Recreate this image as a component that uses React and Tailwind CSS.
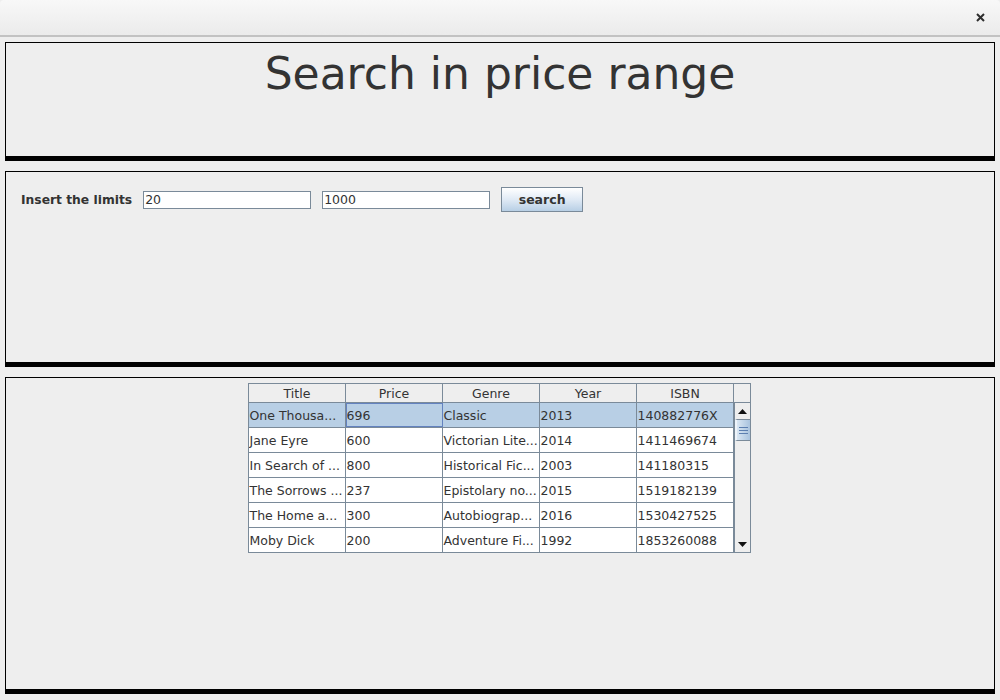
import React from 'react';

const rows = [
  ['One Thousa...', '696', 'Classic', '2013', '140882776X'],
  ['Jane Eyre', '600', 'Victorian Lite...', '2014', '1411469674'],
  ['In Search of ...', '800', 'Historical Fic...', '2003', '141180315'],
  ['The Sorrows ...', '237', 'Epistolary no...', '2015', '1519182139'],
  ['The Home a...', '300', 'Autobiograp...', '2016', '1530427525'],
  ['Moby Dick', '200', 'Adventure Fi...', '1992', '1853260088'],
];

const headers = ['Title', 'Price', 'Genre', 'Year', 'ISBN'];

// Arrow button of the scroll bar
const ArrowButton = ({ up }) => (
  <div className="h-[16px] w-full flex items-center justify-center bg-[#eeeeee]">
    <svg width="9" height="5" viewBox="0 0 9 5">
      {up ? <polygon points="0,5 9,5 4.5,0" fill="#111" /> : <polygon points="0,0 9,0 4.5,5" fill="#111" />}
    </svg>
  </div>
);

const ResultTable = () => (
  <div className="flex border border-[#7a8a99] bg-white">
    <div className="w-[485px] flex flex-col">
      {/* header */}
      <div className="flex h-[19px] bg-[#eeeeee] border-b border-[#7a8a99]">
        {headers.map((h) => (
          <div key={h} className="w-[97px] border-r border-[#7a8a99] flex items-center justify-center pt-[2px] pl-[1px] text-[12.5px] text-[#333333]">
            {h}
          </div>
        ))}
      </div>
      {rows.map((r, i) => (
        <div key={i} className={`flex h-[25px] border-b border-[#7a8a99] last:border-b-0 last:h-[24px] ${i === 0 ? 'bg-[#b8cfe5]' : 'bg-white'}`}>
          {r.map((c, j) => (
            <div
              key={j}
              className={`w-[97px] border-r border-[#7a8a99] flex items-center pl-[1px] pt-[2px] text-[12.5px] text-[#333333] whitespace-nowrap overflow-hidden ${i === 0 && j === 1 ? 'outline outline-1 -outline-offset-1 outline-[#6382bf] border-[#6382bf]' : ''}`}
            >
              {c}
            </div>
          ))}
        </div>
      ))}
    </div>
    {/* vertical scroll bar */}
    <div className="w-[16px] flex flex-col bg-[#eeeeee]">
      <div className="h-[19px] border-b border-[#7a8a99]" />
      <div className="flex-1 flex flex-col border-l border-[#7a8a99]">
        <ArrowButton up />
        <div className="h-[22px] bg-gradient-to-r from-[#dae7f3] to-[#a9c3de] border-l-2 border-l-[#eef4fa] border-y border-[#7a8a99] flex flex-col items-center justify-center gap-[2px]">
          <div className="w-[9px] h-[1px] bg-[#5c7fb0]" />
          <div className="w-[9px] h-[1px] bg-[#5c7fb0]" />
          <div className="w-[9px] h-[1px] bg-[#5c7fb0]" />
        </div>
        <div className="flex-1" />
        <ArrowButton />
      </div>
    </div>
  </div>
);

const App = () => {
  return (
    <div className="w-[1000px] h-[700px] bg-[#eeeeee] overflow-hidden" style={{ fontFamily: '"DejaVu Sans", sans-serif' }}>
      {/* Window title bar */}
      <div className="h-[37px] bg-gradient-to-b from-[#f8f8f8] to-[#ebebeb] border-b-2 border-[#c2c2c2] rounded-t-[4px] flex items-center justify-end pr-[15px]">
        <svg width="9" height="9" viewBox="0 0 9 9">
          <path d="M1 1 L8 8 M8 1 L1 8" stroke="#2e2e2e" strokeWidth="2" />
        </svg>
      </div>

      <div className="flex flex-col gap-[10px] px-[5px] pt-[5px]">
        {/* Heading panel */}
        <div className="h-[119px] border border-black border-b-[5px] flex justify-center pt-[5px]">
          <h1 className="text-[44px] leading-[52px] text-[#333333]">Search in price range</h1>
        </div>

        {/* Input panel */}
        <div className="h-[196px] border border-black border-b-[5px] pt-[15px] pl-[15px]">
          <div className="flex items-center gap-[11px]">
            <span className="text-[12.3px] font-bold text-[#333333] pt-[2px]">Insert the limits</span>
            <input
              defaultValue="20"
              className="w-[168px] h-[18px] bg-white border border-[#7a8a99] px-[1px] pt-[1px] text-[12.5px] text-[#333333] outline-none"
            />
            <input
              defaultValue="1000"
              className="w-[168px] h-[18px] bg-white border border-[#7a8a99] px-[1px] pt-[1px] text-[12.5px] text-[#333333] outline-none"
            />
            <button className="w-[82px] h-[25px] border border-[#7a8a99] bg-gradient-to-b from-[#ffffff] via-[#e0eaf5] to-[#b8cfe5] pt-[1px] text-[12.5px] font-bold text-[#333333]">
              search
            </button>
          </div>
        </div>

        {/* Results panel */}
        <div className="h-[317px] border border-black border-b-[5px] flex justify-center pt-[5px] pr-[2px]">
          <div>
            <ResultTable />
          </div>
        </div>
      </div>
    </div>
  );
};

export default App;
